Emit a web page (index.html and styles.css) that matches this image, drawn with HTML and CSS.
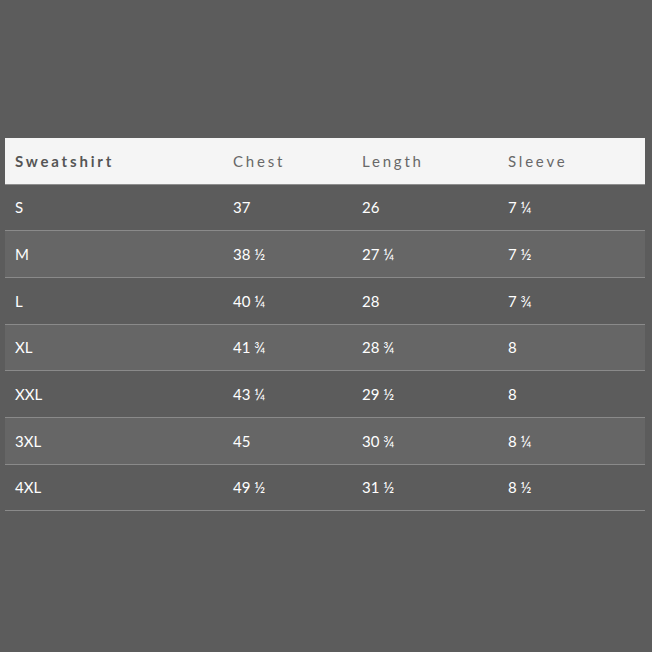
FILE: index.html
```html
<!DOCTYPE html>
<html>
<head>
<meta charset="utf-8">
<link rel="stylesheet" href="styles.css">
</head>
<body>
<div class="page">
  <div class="table">
    <div class="row head">
      <div class="c c1 first">Sweatshirt</div>
      <div class="c c2">Chest</div>
      <div class="c c3">Length</div>
      <div class="c c4">Sleeve</div>
    </div>
    <div class="row"><div class="c c1">S</div><div class="c c2">37</div><div class="c c3">26</div><div class="c c4">7 ¼</div></div>
    <div class="row alt"><div class="c c1">M</div><div class="c c2">38 ½</div><div class="c c3">27 ¼</div><div class="c c4">7 ½</div></div>
    <div class="row"><div class="c c1">L</div><div class="c c2">40 ¼</div><div class="c c3">28</div><div class="c c4">7 ¾</div></div>
    <div class="row alt"><div class="c c1">XL</div><div class="c c2">41 ¾</div><div class="c c3">28 ¾</div><div class="c c4">8</div></div>
    <div class="row"><div class="c c1">XXL</div><div class="c c2">43 ¼</div><div class="c c3">29 ½</div><div class="c c4">8</div></div>
    <div class="row alt"><div class="c c1">3XL</div><div class="c c2">45</div><div class="c c3">30 ¾</div><div class="c c4">8 ¼</div></div>
    <div class="row"><div class="c c1">4XL</div><div class="c c2">49 ½</div><div class="c c3">31 ½</div><div class="c c4">8 ½</div></div>
  </div>
</div>
</body>
</html>
```
FILE: styles.css
```css
html, body {
  margin: 0;
  padding: 0;
  background: #5c5c5c;
}
.page {
  width: 652px;
  height: 652px;
  padding: 138px 7px 0 5px;
  box-sizing: border-box;
  font-family: Lato, "Open Sans", sans-serif;
}
.table {
  width: 640px;
}
.row {
  display: grid;
  grid-template-columns: 218px 129px 146px 147px;
  height: 46.67px;
  box-sizing: border-box;
  border-bottom: 1px solid #8a8a8a;
  align-items: center;
}
.row.alt {
  background: #666666;
}
.row.head {
  background: #f5f5f5;
  border-bottom-color: #8e8e8e;
}
.c {
  padding-left: 10px;
  color: #ffffff;
  font-size: 15px;
}
.head .c {
  color: #686868;
  letter-spacing: 2.8px;
  font-weight: 400;
  font-size: 15px;
}
.head .c.first {
  font-weight: 700;
  letter-spacing: 2.8px;
  color: #555555;
}
```
